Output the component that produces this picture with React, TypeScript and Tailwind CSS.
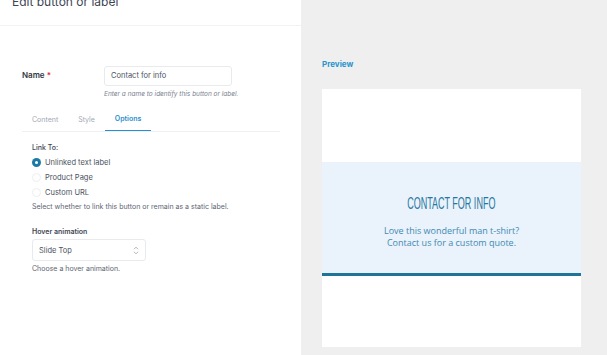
import { useState } from 'react';

const options = ['Unlinked text label', 'Product Page', 'Custom URL'];

const Radio = ({ checked, label }: { checked: boolean; label: string }) => (
  <label className="flex items-center gap-[4px] h-[15px]">
    {checked ? (
      <span className="w-[9px] h-[9px] rounded-full bg-[#1b7ba6] flex items-center justify-center">
        <span className="w-[3px] h-[3px] rounded-full bg-white" />
      </span>
    ) : (
      <span className="w-[9px] h-[9px] rounded-full border border-[#eceef1] bg-white" />
    )}
    <span className="text-[7.5px] text-[#4a5260]">{label}</span>
  </label>
);

const App = () => {
  const [tab] = useState('Options');

  return (
    <div
      className="flex w-[607px] h-[355px] overflow-hidden"
      style={{ fontFamily: 'Inter, "Liberation Sans", sans-serif' }}
    >
      <div className="w-[301px] bg-white flex flex-col">
        <div className="h-[26px] border-b border-[#f1f2f4] px-[12px] overflow-hidden">
          <div className="mt-[-6px] text-[12px] leading-[16px] text-[#3d4554]">Edit button or label</div>
        </div>

        <div className="px-[22px] pt-[40px]">
          <div className="flex">
            <div className="w-[82px] pt-[3px] text-[8px] font-semibold text-[#2f3744]">
              Name <span className="text-[#e0263a]">*</span>
            </div>
            <div>
              <div className="w-[128px] h-[20px] border border-[#e8eaee] rounded-[3px] flex items-center px-[6px] text-[7.5px] text-[#4a5260]">
                Contact for info
              </div>
              <div className="mt-[4px] text-[6.5px] italic text-[#7a8290]">
                Enter a name to identify this button or label.
              </div>
            </div>
          </div>

          <div className="mt-[9px] flex border-b border-[#eef0f3] w-[258px] h-[23px]">
            <div className="px-[10px] flex items-center text-[7px] text-[#a3a9b3]">Content</div>
            <div className="px-[10px] flex items-center text-[7px] text-[#a3a9b3]">Style</div>
            <div className="px-[10px] flex items-center text-[7px] font-semibold text-[#2b8fcf] border-b-[1.5px] border-[#2b8fcf]">
              {tab}
            </div>
          </div>

          <div className="px-[10px] pt-[11px]">
            <div className="text-[7px] font-medium text-[#3d4554] mb-[2px]">Link To:</div>
            <div className="flex flex-col">
              {options.map((o, i) => (
                <Radio key={o} checked={i === 0} label={o} />
              ))}
            </div>
            <div className="mt-[2px] text-[7px] text-[#5d6572]">
              Select whether to link this button or remain as a static label.
            </div>

            <div className="mt-[14px] text-[7px] font-semibold text-[#3d4554]">Hover animation</div>
            <div className="mt-[2px] w-[114px] h-[22px] border border-[#e8eaee] rounded-[3px] flex items-center justify-between px-[6px]">
              <span className="text-[7.5px] text-[#4a5260]">Slide Top</span>
              <svg width="6" height="9" viewBox="0 0 6 9" fill="none" stroke="#9aa0aa" strokeWidth="0.8">
                <path d="M1 3.2 L3 1.2 L5 3.2" />
                <path d="M1 5.8 L3 7.8 L5 5.8" />
              </svg>
            </div>
            <div className="mt-[3px] text-[7px] text-[#5d6572]">Choose a hover animation.</div>
          </div>
        </div>
      </div>

      <div className="flex-1 bg-[#efefef] pl-[21px] pt-[58px]">
        <div className="text-[8px] font-bold text-[#2a95cc]">Preview</div>
        <div className="mt-[19px] w-[259px] h-[258px] bg-white flex flex-col">
          <div className="h-[73px]" />
          <div className="h-[114px] bg-[#eaf2fb] border-b-[3px] border-[#1f7499] flex flex-col items-center pt-[32px]">
            <div
              className="text-[17px] leading-[19px] text-[#2576a0] scale-x-[0.53]"
              style={{ fontFamily: '"Liberation Sans", sans-serif' }}
            >
              CONTACT FOR INFO
            </div>
            <div
              className="mt-[12px] text-[9px] leading-[12px] text-[#3f8ab2] text-center"
              style={{ fontFamily: '"Open Sans", sans-serif' }}
            >
              Love this wonderful man t-shirt?
              <br />
              Contact us for a custom quote.
            </div>
          </div>
        </div>
      </div>
    </div>
  );
};

export default App;
